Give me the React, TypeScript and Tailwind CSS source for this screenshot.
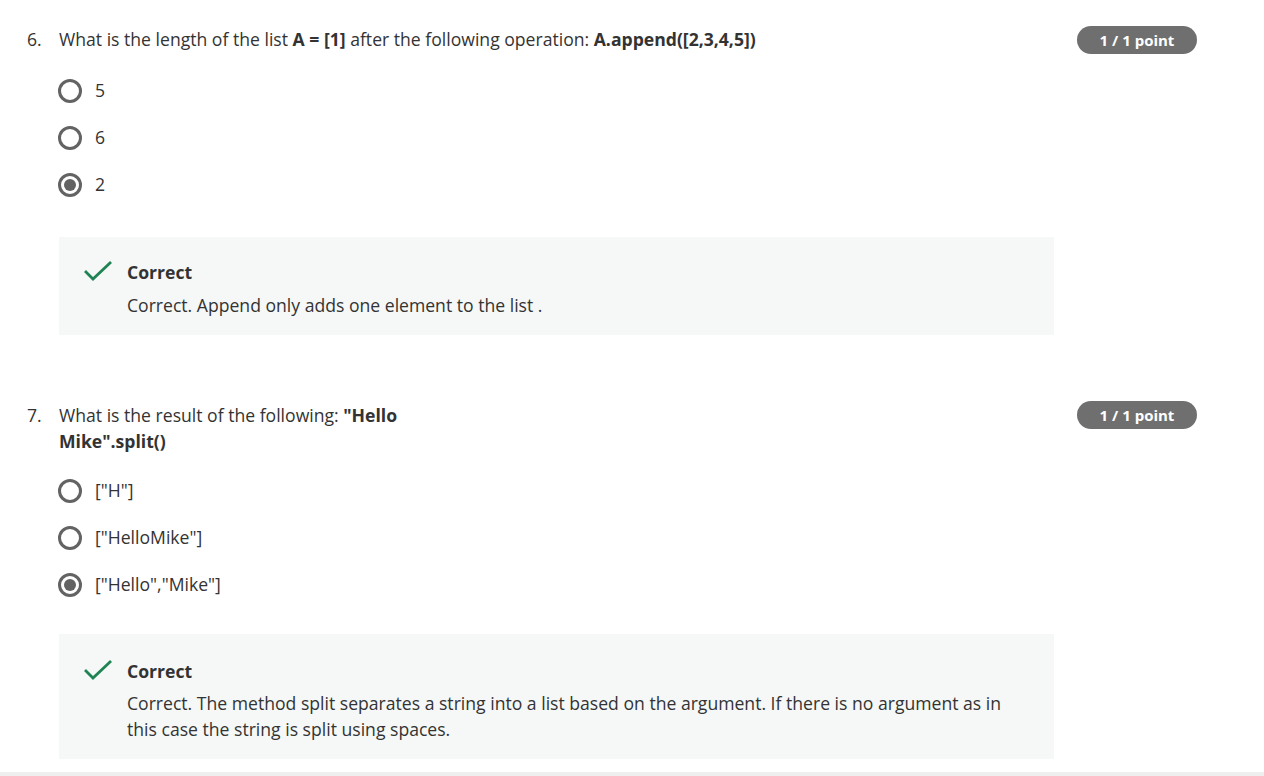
import React from "react";

function Radio({ checked }: { checked?: boolean }) {
  return (
    <span className="flex h-6 w-6 shrink-0 items-center justify-center rounded-full border-[3px] border-[#636363]">
      {checked && <span className="h-[12px] w-[12px] rounded-full bg-[#636363]" />}
    </span>
  );
}

function Check() {
  return (
    <svg width="28" height="22" viewBox="0 0 28 22" className="shrink-0">
      <path d="M2 12 L9 19 L26 3" fill="none" stroke="#1f8354" strokeWidth="2.8" strokeLinecap="square" />
    </svg>
  );
}

function Badge() {
  return (
    <div className="flex h-[28px] w-[120px] shrink-0 items-center justify-center rounded-full bg-[#6f6f6f] text-[15px] font-bold text-white">
      1 / 1 point
    </div>
  );
}

function Option({ label, checked }: { label: string; checked?: boolean }) {
  return (
    <div className="flex h-[47px] items-center gap-[13px]">
      <Radio checked={checked} />
      <span className="text-[17.6px] text-[#333]">{label}</span>
    </div>
  );
}

function Feedback({ children, tall }: { children: React.ReactNode; tall?: boolean }) {
  return (
    <div
      className={
        tall
          ? "flex w-[995px] gap-[15px] bg-[#f5f8f7] pb-[17px] pl-[25px] pr-[50px] pt-[24px]"
          : "flex w-[995px] gap-[15px] bg-[#f5f8f7] pb-[17px] pl-[25px] pr-[50px] pt-[22px]"
      }
    >
      <div className="pt-[1px]">
        <Check />
      </div>
      <div className="flex flex-col text-[17.6px] leading-[26px] text-[#333]">
        <span className="font-bold">Correct</span>
        <span className={tall ? "mt-[6px]" : "mt-[7px]"}>{children}</span>
      </div>
    </div>
  );
}

export default function App() {
  return (
    <div
      className="relative h-[776px] w-[1264px] overflow-hidden bg-white text-[#333]"
      style={{ fontFamily: '"Open Sans", "Liberation Sans", sans-serif' }}
    >
      <div className="pl-[27px] pr-[67px] pt-[26px]">
        {/* Question 6 */}
        <div className="flex items-start justify-between">
          <div className="flex text-[17.6px] leading-[26px]">
            <span className="w-[32px]">6.</span>
            <span>
              What is the length of the list <b>A = [1]</b> after the following operation:{" "}
              <b>A.append([2,3,4,5])</b>
            </span>
          </div>
          <Badge />
        </div>
        <div className="ml-[31px] mt-[13px] flex flex-col">
          <Option label="5" />
          <Option label="6" />
          <Option label="2" checked />
        </div>
        <div className="ml-[32px] mt-[29px]">
          <Feedback>Correct. Append only adds one element to the list .</Feedback>
        </div>

        {/* Question 7 */}
        <div className="mt-[67px] flex items-start justify-between">
          <div className="flex text-[17.6px] leading-[26px]">
            <span className="w-[32px]">7.</span>
            <span>
              What is the result of the following: <b>"Hello</b>
              <br />
              <b>Mike".split()</b>
            </span>
          </div>
          <div className="mt-[-1px]">
            <Badge />
          </div>
        </div>
        <div className="ml-[31px] mt-[13px] flex flex-col">
          <Option label={'["H"]'} />
          <Option label={'["HelloMike"]'} />
          <Option label={'["Hello","Mike"]'} checked />
        </div>
        <div className="ml-[32px] mt-[26px]">
          <Feedback tall>
            Correct. The method split separates a string into a list based on the argument. If there is no argument as in
            this case the string is split using spaces.
          </Feedback>
        </div>
      </div>
      <div className="absolute bottom-0 left-0 h-[4px] w-full bg-[#efefef]" />
    </div>
  );
}
